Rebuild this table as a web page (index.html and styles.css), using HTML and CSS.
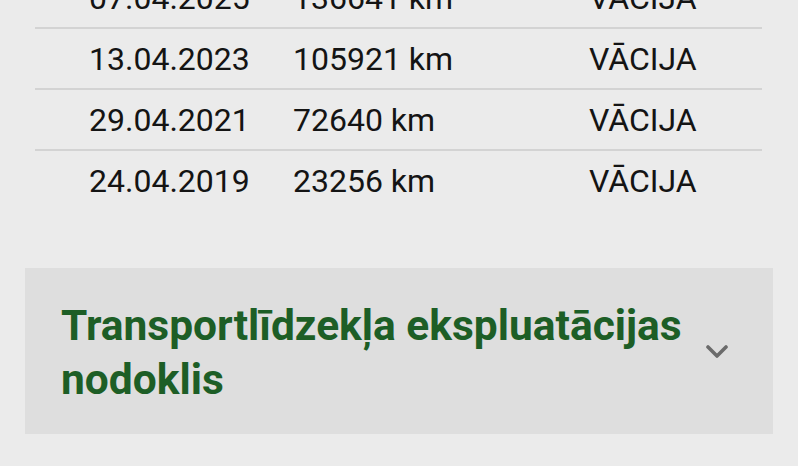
FILE: index.html
```html
<!DOCTYPE html>
<html lang="lv">
<head>
<meta charset="utf-8">
<link rel="stylesheet" href="styles.css">
</head>
<body>
<div class="page">
  <div class="table">
    <div class="row"><span>07.04.2025</span><span>136641 km</span><span>VĀCIJA</span></div>
    <div class="row"><span>13.04.2023</span><span>105921 km</span><span>VĀCIJA</span></div>
    <div class="row"><span>29.04.2021</span><span>72640 km</span><span>VĀCIJA</span></div>
    <div class="row last"><span>24.04.2019</span><span>23256 km</span><span>VĀCIJA</span></div>
  </div>
  <div class="card">
    <div class="card-title">Transportlīdzekļa ekspluatācijas nodoklis</div>
    <svg class="chev" width="22" height="14" viewBox="0 0 22 14"><path d="M2 2 L11 11 L20 2" fill="none" stroke="#6b6b6b" stroke-width="3.6" stroke-linecap="round" stroke-linejoin="round"/></svg>
  </div>
</div>
</body>
</html>
```

FILE: styles.css
```css
html, body {
  margin: 0;
  padding: 0;
  background: #ebebeb;
  overflow: hidden;
}
.page {
  width: 798px;
  height: 466px;
  font-family: Roboto, "Noto Sans", sans-serif;
}
.table {
  margin: -32px 36px 0 35px;
}
.row {
  display: grid;
  grid-template-columns: 204px 296px 1fr;
  padding: 12px 0 11px 54px;
  font-size: 32px;
  line-height: 36px;
  color: #141414;
  border-bottom: 2px solid #d3d3d3;
}
.row.last {
  border-bottom: none;
}
.card {
  margin: 58px 25px 0 25px;
  height: 170px;
  box-sizing: border-box;
  background: #dedede;
  display: flex;
  align-items: center;
  padding: 0 45px 0 36px;
}
.card-title {
  flex: 1;
  font-size: 42.5px;
  line-height: 54px;
  font-weight: 700;
  color: #1d5e26;
  padding-right: 20px;
}
.chev {
  flex: none;
  margin-top: -2px;
}
```
